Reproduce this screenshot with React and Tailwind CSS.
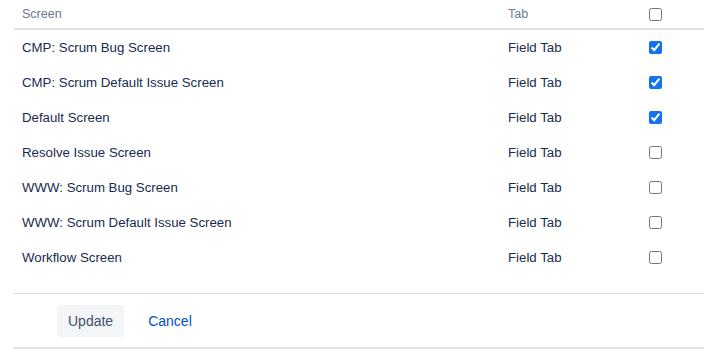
import React, { useState } from 'react';

const rows = [
  { name: 'CMP: Scrum Bug Screen', checked: true },
  { name: 'CMP: Scrum Default Issue Screen', checked: true },
  { name: 'Default Screen', checked: true },
  { name: 'Resolve Issue Screen', checked: false },
  { name: 'WWW: Scrum Bug Screen', checked: false },
  { name: 'WWW: Scrum Default Issue Screen', checked: false },
  { name: 'Workflow Screen', checked: false },
];

const App = () => {
  const [items, setItems] = useState(rows);
  const allChecked = items.every(r => r.checked);

  const toggle = i => setItems(items.map((r, j) => (j === i ? { ...r, checked: !r.checked } : r)));
  const toggleAll = () => setItems(items.map(r => ({ ...r, checked: !allChecked })));

  return (
    <div className="w-[704px] bg-white pl-[13px]" style={{ fontFamily: '"Liberation Sans", Arial, sans-serif' }}>
      {/* Table */}
      <div className="pl-px">
        <div className="flex h-[30px] items-center border-b-2 border-[#dfe1e6] text-[12.5px] text-[#6b778c]">
          <div className="w-[494px] pl-2">Screen</div>
          <div className="w-[141px]">Tab</div>
          <div className="flex items-center">
            <input type="checkbox" checked={allChecked} onChange={toggleAll}
              className="m-0 h-[13px] w-[13px] accent-[#1471ef]" />
          </div>
        </div>
        {items.map((r, i) => (
          <div key={r.name} className="flex h-[35px] items-center text-[13.25px] text-[#172b4d]">
            <div className="w-[494px] pl-2">{r.name}</div>
            <div className="w-[141px]">Field Tab</div>
            <div className="flex items-center">
              <input type="checkbox" checked={r.checked} onChange={() => toggle(i)}
                className="m-0 h-[13px] w-[13px] accent-[#1471ef]" />
            </div>
          </div>
        ))}
      </div>

      {/* Actions */}
      <div className="mt-[18px] border-t border-b-2 border-[#dfe1e6] pb-[10px] pl-[44px] pt-[11px]">
        <div className="flex items-center gap-[12px]">
          <button className="h-[32px] rounded-[3px] bg-[#f4f5f7] px-[11px] text-[14px] text-[#42526e]">
            Update
          </button>
          <button className="h-[32px] px-[12px] text-[14px] text-[#0052cc]">
            Cancel
          </button>
        </div>
      </div>
    </div>
  );
};

export default App;
